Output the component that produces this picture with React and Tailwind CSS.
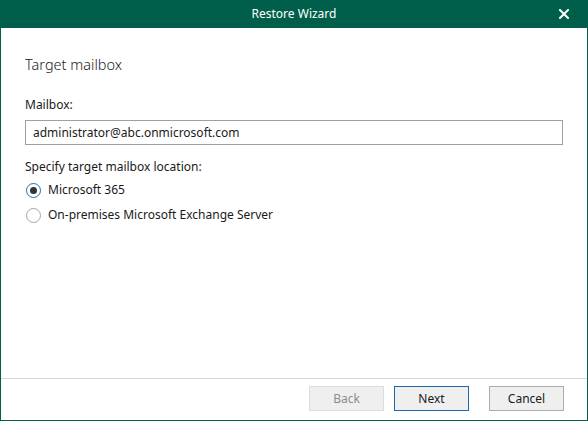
import React from "react";

export default function App() {
  const font = { fontFamily: '"Segoe UI", "Noto Sans", "Open Sans", sans-serif' };
  return (
    <div className="w-[588px] h-[421px] flex flex-col bg-[#005f4b] text-[#1a1a1a]" style={font}>
      <div className="h-[28px] flex items-center relative shrink-0">
        <div className="flex-1 flex justify-center text-white text-[12px]">Restore Wizard</div>
        <svg className="absolute left-[559px] top-[9px]" width="10" height="10" viewBox="0 0 10 10">
          <path d="M1 1 L9 9 M9 1 L1 9" stroke="white" strokeWidth="2" strokeLinecap="square" />
        </svg>
      </div>
      <div className="flex-1 mx-[1px] mb-[1px] bg-white flex flex-col">
        <div className="flex-1 flex flex-col pl-[24px] pr-[24px]">
          <div className="mt-[26px] text-[14.5px] font-light leading-[20px] text-[#222]">Target mailbox</div>
          <div className="mt-[23px] text-[12px] leading-[16px]">Mailbox:</div>
          <div className="mt-[7px] h-[25px] border border-[#a0a0a0] flex items-center px-[7px] text-[12px]">
            administrator@abc.onmicrosoft.com
          </div>
          <div className="mt-[14px] text-[12px] leading-[16px]">Specify target mailbox location:</div>
          <div className="mt-[5px] flex items-center h-[20px] text-[12px]">
            <div className="ml-[1px] w-[15px] h-[15px] rounded-full border border-[#1e6fba] flex items-center justify-center">
              <div className="w-[7px] h-[7px] rounded-full bg-[#333]" />
            </div>
            <span className="ml-[7px]">Microsoft 365</span>
          </div>
          <div className="mt-[5px] flex items-center h-[20px] text-[12px]">
            <div className="ml-[1px] w-[15px] h-[15px] rounded-full border border-[#a6a6a6]" />
            <span className="ml-[7px]">On-premises Microsoft Exchange Server</span>
          </div>
        </div>
        <div className="h-[1px] bg-[#d6d6d6]" />
        <div className="h-[41px] flex items-start justify-end pr-[23px] pt-[7px] text-[12px]">
          <div className="w-[75px] h-[25px] border border-[#dcdcdc] bg-[#efefef] text-[#8d8d8d] flex items-center justify-center">Back</div>
          <div className="ml-[10px] w-[75px] h-[25px] border border-[#1a67ab] bg-[#efefef] flex items-center justify-center">Next</div>
          <div className="ml-[20px] w-[75px] h-[25px] border border-[#adadad] bg-[#efefef] flex items-center justify-center">Cancel</div>
        </div>
      </div>
    </div>
  );
}
